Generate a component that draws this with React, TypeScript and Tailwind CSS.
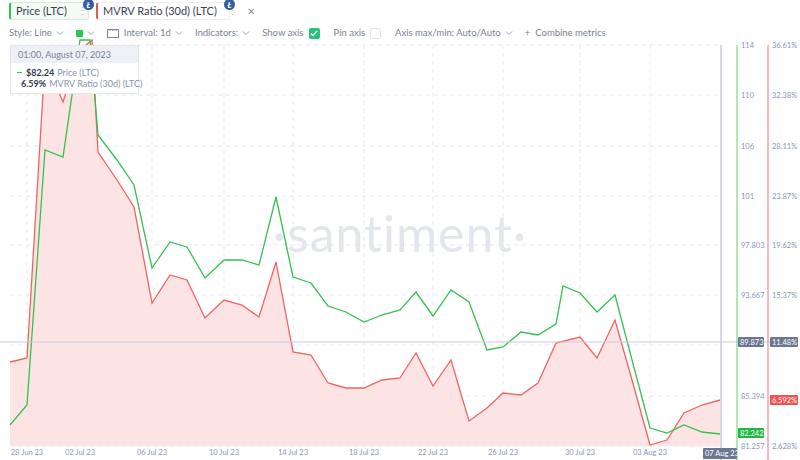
import React from "react";

const G = [[10,425],[27,405],[45,150],[63,157],[80,40],[90,40],[98,135],[117,160],[134,185],[152,268],[170,242],[187,247],[205,278],[224,260],[242,260],[259,265],[276,197],[293,277],[311,283],[328,306],[346,312],[364,322],[382,315],[400,310],[416,292],[433,316],[451,290],[469,302],[487,350],[503,347],[521,332],[538,335],[556,324],[563,286],[580,293],[597,312],[615,295],[632,360],[650,428],[667,433],[684,425],[702,432],[720,434]];
const R = [[10,362],[27,358],[45,60],[63,102],[80,50],[92,40],[98,152],[117,180],[134,207],[152,303],[170,275],[187,280],[205,318],[224,300],[242,305],[259,317],[276,262],[293,352],[311,355],[328,383],[346,388],[364,388],[382,380],[400,378],[416,353],[433,386],[451,360],[469,421],[487,408],[503,393],[521,395],[538,383],[556,343],[580,337],[597,358],[615,320],[632,380],[650,445],[667,440],[684,413],[702,405],[720,400]];
const pts = (a: number[][]) => a.map(p => p.join(",")).join(" ");
const hy = [45,95,146,196,245,295,345,396,446];
const dates: [string, number][] = [["28 Jun 23",27],["02 Jul 23",80],["06 Jul 23",152],["10 Jul 23",224],["14 Jul 23",293],["18 Jul 23",364],["22 Jul 23",433],["26 Jul 23",503],["30 Jul 23",580],["03 Aug 23",650]];
const prices: [string, number][] = [["114",45],["110",95],["106",146],["101",196],["97.803",245],["93.667",295],["85.394",396],["81.257",446]];
const pcts: [string, number][] = [["36.61%",45],["32.38%",95],["28.11%",146],["23.87%",196],["19.62%",245],["15.37%",295],["2.628%",446]];

function Chev() {
  return <svg width="8" height="6" viewBox="0 0 8 6" className="ml-1 shrink-0"><path d="M1 1.5l3 3 3-3" stroke="#9aa3b5" fill="none" strokeWidth="1"/></svg>;
}

export default function App() {
  return (
    <div className="w-[800px] h-[460px] bg-white relative overflow-hidden text-[#5b6478] whitespace-nowrap" style={{ fontFamily: "Lato, 'Liberation Sans', sans-serif" }}>
      <div className="flex gap-[7px] pl-[9px] pt-[2px] h-[20px] text-[11px]">
        <div className="relative shrink-0 flex items-center h-[18px] w-[80px] border border-[#d7e9d9] border-l-2 border-l-[#2cc750] bg-[#f3fbf4] rounded-[3px] pl-[5px] text-[#3a4252]">
          Price (LTC)<span className="ml-[10px] text-[#b8bfcc]">⋮</span><span className="ml-[9px] text-[#8a93a6] text-[10px]">✕</span>
          <span className="absolute -top-[4px] -right-[6px] w-[11px] h-[11px] rounded-full bg-[#345d9d] text-white text-[8px] italic font-bold flex items-center justify-center">Ł</span>
        </div>
        <div className="relative shrink-0 flex items-center h-[18px] w-[134px] border border-[#eee] border-l-2 border-l-[#ef5350] bg-white rounded-[3px] pl-[5px] text-[#3a4252]">
          MVRV Ratio (30d) (LTC)<span className="ml-[10px] text-[#b8bfcc]">⋮</span><span className="ml-[9px] text-[#8a93a6] text-[10px]">✕</span>
          <span className="absolute -top-[4px] -right-[6px] w-[11px] h-[11px] rounded-full bg-[#345d9d] text-white text-[8px] italic font-bold flex items-center justify-center">Ł</span>
        </div>
      </div>
      <div className="flex items-center h-[24px] pl-[9px] text-[9.5px] text-[#7a8296] mt-[1px]">
        <span>Style: Line</span><Chev/>
        <span className="ml-[12px] w-[7px] h-[7px] bg-[#26c953] rounded-[1px]"></span><Chev/>
        <svg width="12" height="10" className="ml-[12px]" viewBox="0 0 12 10"><rect x="0.5" y="1.5" width="11" height="8" fill="none" stroke="#7a8296"/><path d="M3 1v2M6 1v2M9 1v2" stroke="#7a8296"/></svg>
        <span className="ml-[5px]">Interval: 1d</span><Chev/>
        <span className="ml-[12px]">Indicators:</span><Chev/>
        <span className="ml-[12px]">Show axis</span>
        <span className="ml-[5px] w-[11px] h-[11px] bg-[#26c27a] rounded-[2px] flex items-center justify-center"><svg width="8" height="7" viewBox="0 0 8 7"><path d="M1 3.5l2 2 4-4.5" stroke="white" fill="none" strokeWidth="1.4"/></svg></span>
        <span className="ml-[14px]">Pin axis</span>
        <span className="ml-[5px] w-[11px] h-[11px] border border-[#dfe3ea] rounded-[2px]"></span>
        <span className="ml-[14px]">Axis max/min: Auto/Auto</span><Chev/>
        <span className="ml-[12px]">+</span><span className="ml-[5px]">Combine metrics</span>
      </div>
      <div className="absolute left-0 top-0 w-[800px] h-[460px] pointer-events-none">
        <svg width="800" height="460" className="absolute left-0 top-0">
          {hy.map(y => <line key={y} x1="10" x2="720" y1={y} y2={y} stroke="#e6e9ef" strokeDasharray="4 4" />)}
          {dates.map(([d, x]) => <line key={d} x1={x} x2={x} y1="45" y2="446" stroke="#e6e9ef" strokeDasharray="4 4" />)}
          <text x="400" y="252" textAnchor="middle" fontSize="50" fill="#e3e6ec" style={{ fontFamily: "Lato, sans-serif", letterSpacing: "1px" }}>·santiment·</text>
          <polygon points={`10,446 ${pts(R)} 720,446`} fill="#fde4e4" />
          <polyline points={pts(R)} fill="none" stroke="#ef6461" strokeWidth="1.3" />
          <polyline points={pts(G)} fill="none" stroke="#32c24d" strokeWidth="1.3" />
          <line x1="721" x2="721" y1="45" y2="460" stroke="#c9cbe0" strokeWidth="1.5"/>
          <line x1="0" x2="795" y1="342" y2="342" stroke="#c9cbe0" strokeWidth="1"/>
          <line x1="737" x2="737" y1="45" y2="460" stroke="#5fd36d" />
          <line x1="768" x2="768" y1="45" y2="460" stroke="#ef7774" />
          {prices.map(([t, y]) => <text key={t} x="741" y={y + 3} fontSize="7.5" fill="#8a94b8">{t}</text>)}
          {pcts.map(([t, y]) => <text key={t} x="772" y={y + 3} fontSize="7.5" fill="#8a94b8">{t}</text>)}
          {dates.map(([d, x]) => <text key={d} x={x} y="455" fontSize="7.5" fill="#8a94b8" textAnchor="middle">{d}</text>)}
          <rect x="738" y="337" width="26" height="10" fill="#6c7793" rx="1"/>
          <text x="740" y="345" fontSize="7.5" fill="#fff">89.873</text>
          <rect x="770" y="337" width="28" height="10" fill="#6c7793" rx="1"/>
          <text x="772" y="345" fontSize="7.5" fill="#fff">11.48%</text>
          <rect x="770" y="395" width="28" height="10" fill="#ef5350" rx="1"/>
          <text x="772" y="403" fontSize="7.5" fill="#fff">6.592%</text>
          <rect x="738" y="428" width="26" height="10" fill="#22b845" rx="1"/>
          <text x="740" y="436" fontSize="7.5" fill="#fff">82.242</text>
          <rect x="703" y="448" width="34" height="11" fill="#6c7793" rx="1"/>
          <text x="705" y="456" fontSize="7.5" fill="#fff">07 Aug 23</text>
        </svg>
        <div className="absolute left-[10px] top-[45px] w-[129px] bg-white border border-[#e3e6ee] text-[9px]">
          <div className="h-[17px] bg-[#eef0f5] flex items-center pl-[7px] text-[#7a8296]">01:00, August 07, 2023</div>
          <div className="py-[4px] pl-[6px] leading-[11px]">
            <div className="flex items-center"><span className="w-[5px] h-[1.5px] bg-[#26c953] mr-[4px]"></span><b className="text-[#333a48]">$82.24</b><span className="ml-[3px] text-[#8a93a6]">Price (LTC)</span></div>
            <div className="flex items-center"><span className="w-[5px] h-[1.5px] bg-[#ef5350] mr-[4px]"></span><b className="text-[#333a48]">6.59%</b><span className="ml-[3px] text-[#8a93a6]">MVRV Ratio (30d) (LTC)</span></div>
          </div>
        </div>
      </div>
    </div>
  );
}
